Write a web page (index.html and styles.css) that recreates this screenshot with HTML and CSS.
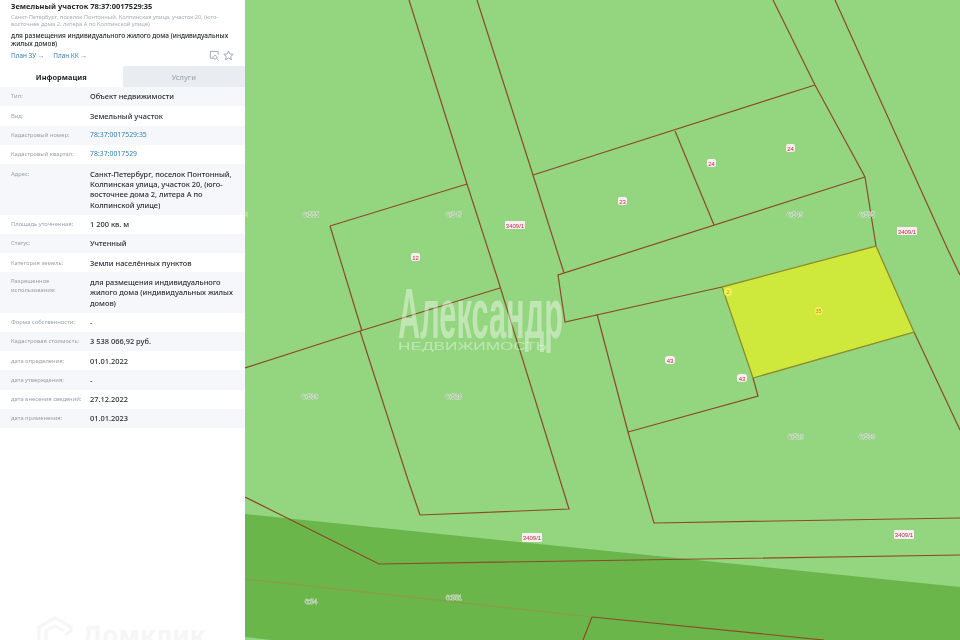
FILE: index.html
```html
<!DOCTYPE html>
<html lang="ru">
<head>
<meta charset="utf-8">
<title>Земельный участок 78:37:0017529:35</title>
<link rel="stylesheet" href="styles.css">
</head>
<body>
<div class="page">
  <aside class="panel">
    <header class="head">
      <h1 class="title">Земельный участок 78:37:0017529:35</h1>
      <p class="addr">Санкт-Петербург, поселок Понтонный, Колпинская улица, участок 20, (юго-восточнее дома 2, литера А по Колпинской улице)</p>
      <p class="use">для размещения индивидуального жилого дома (индивидуальных жилых домов)</p>
      <div class="actions">
        <a class="plan">План ЗУ →</a>
        <a class="plan">План КК →</a>
        <span class="icons">
          <svg class="icon" viewBox="0 0 12 12"><path d="M10 5V1.500H1.500V9H5M6.500 6a2 2 0 1 0 .01 0zM8.500 9.500l2 2" fill="none" stroke="#9aa3ad" stroke-width="1"/></svg>
          <svg class="icon" viewBox="0 0 12 12"><path d="M6 1l1.500 3.300 3.600.4-2.700 2.400.8 3.500L6 8.800l-3.200 1.800.8-3.500L.9 4.700l3.600-.4z" fill="none" stroke="#9aa3ad" stroke-width="1"/></svg>
        </span>
      </div>
    </header>
    <nav class="tabs">
      <div class="tab active">Информация</div>
      <div class="tab">Услуги</div>
    </nav>
    <dl class="rows">
      <div class="row"><dt>Тип:</dt><dd>Объект недвижимости</dd></div>
      <div class="row"><dt>Вид:</dt><dd>Земельный участок</dd></div>
      <div class="row"><dt>Кадастровый номер:</dt><dd class="link">78:37:0017529:35</dd></div>
      <div class="row"><dt>Кадастровый квартал:</dt><dd class="link">78:37:0017529</dd></div>
      <div class="row"><dt>Адрес:</dt><dd>Санкт-Петербург, поселок Понтонный, Колпинская улица, участок 20, (юго-восточнее дома 2, литера А по Колпинской улице)</dd></div>
      <div class="row"><dt>Площадь уточненная:</dt><dd>1 200 кв. м</dd></div>
      <div class="row"><dt>Статус:</dt><dd>Учтенный</dd></div>
      <div class="row"><dt>Категория земель:</dt><dd>Земли населённых пунктов</dd></div>
      <div class="row"><dt>Разрешенное использование:</dt><dd>для размещения индивидуального жилого дома (индивидуальных жилых домов)</dd></div>
      <div class="row"><dt>Форма собственности:</dt><dd>-</dd></div>
      <div class="row"><dt>Кадастровая стоимость:</dt><dd>3 538 066,92 руб.</dd></div>
      <div class="row"><dt>дата определения:</dt><dd>01.01.2022</dd></div>
      <div class="row"><dt>дата утверждения:</dt><dd>-</dd></div>
      <div class="row"><dt>дата внесения сведений:</dt><dd>27.12.2022</dd></div>
      <div class="row"><dt>дата применения:</dt><dd>01.01.2023</dd></div>
    </dl>
  </aside>
  <svg class="map" viewBox="245 0 715 640" aria-label="Кадастровая карта">
    <rect class="land" x="245" y="0" width="715" height="640"/>
    <polygon class="band" points="245,514 960,587 960,640 272,640 245,637"/>
    <polygon class="plot" points="722,287 876,246 914,332 753,378"/>
    <polyline class="faint" points="245,579 592,617"/>
    <g class="lines">
      <polyline points="409,0 467,184 498,280 569,509 420,515 408,480 360,331"/>
      <polyline points="330,226 467,184"/>
      <polyline points="330,226 362,331"/>
      <polyline points="245,368 360,331 500,288"/>
      <polyline points="477,0 533,175 564,273"/>
      <polyline points="533,175 815,85"/>
      <polyline points="773,0 815,85 865,177 876,246"/>
      <polyline points="835,0 948,250 960,275"/>
      <polyline points="675,131 714,225"/>
      <polyline points="865,177 558,275 565,322 722,287"/>
      <polyline points="597,314 628,432 654,523 960,518"/>
      <polyline points="628,432 758,396 753,378"/>
      <polyline points="914,332 960,430"/>
      <polyline points="245,497 379,564 960,555"/>
      <polyline points="592,617 824,640"/>
      <polyline points="592,617 583,640"/>
    </g>
    <polygon class="plot-edge" points="722,287 876,246 914,332 753,378"/>

    <g class="tag"><rect x="411" y="253" width="9" height="8" rx="2"/><text x="415.500" y="259.500">12</text></g>
    <g class="tag"><rect x="618" y="197" width="9" height="8" rx="2"/><text x="622.500" y="203.500">23</text></g>
    <g class="tag"><rect x="707" y="159" width="9" height="8" rx="2"/><text x="711.500" y="165.500">24</text></g>
    <g class="tag"><rect x="786" y="144" width="9" height="8" rx="2"/><text x="790.500" y="150.500">24</text></g>
    <g class="tag"><rect x="665" y="356" width="10" height="8" rx="3"/><text x="670" y="362.500">43</text></g>
    <g class="tag"><rect x="737" y="374" width="10" height="8" rx="3"/><text x="742" y="380.500">43</text></g>
    <g class="tag wide"><rect x="505" y="221" width="20" height="8" rx="1"/><text x="515" y="227.500">3409/1</text></g>
    <g class="tag wide"><rect x="897" y="227" width="20" height="8" rx="1"/><text x="907" y="233.500">3409/1</text></g>
    <g class="tag wide"><rect x="522" y="533" width="20" height="9" rx="1"/><text x="532" y="540">3409/1</text></g>
    <g class="tag wide"><rect x="894" y="530" width="20" height="9" rx="1"/><text x="904" y="537">3409/1</text></g>

    <g class="halo">
      <text x="311" y="216.500">6:555</text>
      <text x="454" y="216.500">6:547</text>
      <text x="795" y="216.500">6:549</text>
      <text x="867" y="216.500">6:555</text>
      <text x="310" y="398.500">6:530</text>
      <text x="454" y="398.500">6:528</text>
      <text x="796" y="438.500">6:529</text>
      <text x="867" y="438.500">6:530</text>
      <text x="311" y="603.500">6:54</text>
      <text x="454" y="599.500">6:551</text>
      <text x="246" y="216.500">9</text>
    </g>
    <g class="spot"><circle cx="728" cy="292" r="4"/><text x="728" y="294">2</text></g>
    <g class="spot"><circle cx="818.500" cy="311" r="4"/><text x="818.500" y="313">35</text></g>

    <text class="mark-big" x="398" y="338" textLength="165" lengthAdjust="spacingAndGlyphs">Александр</text>
    <text class="mark-small" x="398" y="350" textLength="149" lengthAdjust="spacingAndGlyphs">НЕДВИЖИМОСТЬ</text>
  </svg>
  <div class="brand">
    <svg class="brand-logo" viewBox="0 0 38 26"><path d="M3 26V11L19 2l16 9v4l-6 4M10 26V15l9-5 9 5" fill="none" stroke="#f6f6f6" stroke-width="3"/></svg>
    <span class="brand-name">Домклик</span>
  </div>
</div>
</body>
</html>
```

FILE: styles.css
```css
* { box-sizing: border-box; }
html, body { margin: 0; padding: 0; background: #fff; }
body { font-family: "Noto Sans", "Open Sans", sans-serif; }
.page { position: relative; display: flex; width: 960px; height: 640px; overflow: hidden; }

.panel { flex: 0 0 245px; width: 245px; background: #fff; color: #1f2328; filter: blur(.25px); }
.head { height: 66px; padding: 0 11px; }
.title { margin: 0; font-size: 7.500px; line-height: 12px; font-weight: 700; }
.addr { margin: 2px 0 0; font-size: 5.700px; line-height: 6.800px; color: #a8adb5; }
.use { margin: 4.400px 0 0; font-size: 6.500px; line-height: 8px; font-weight: 500; color: #23272c; }
.actions { display: flex; align-items: center; gap: 9px; margin-top: 2px; height: 12px; }
.plan { font-size: 6.400px; line-height: 10px; color: #2f7fb5; }
.icons { display: flex; gap: 3px; margin-left: auto; }
.icon { width: 11px; height: 11px; display: block; }

.tabs { display: flex; height: 21px; }
.tab { flex: 1 1 50%; display: flex; align-items: center; justify-content: center; font-size: 7.400px; font-weight: 700; color: #a0a8b0; background: #e9edf1; }
.tab:last-child { font-weight: 500; }
.tab.active { color: #1f2328; background: #fff; }

.rows { margin: 0; }
.row { display: grid; grid-template-columns: 79px 1fr; padding: 4.450px 7px 4.450px 11px; }
.row:nth-child(odd) { background: #f5f7fa; }
dt { font-size: 5.800px; line-height: 10.400px; color: #9ba1a9; white-space: nowrap; }
.row:nth-child(9) dt { line-height: 8.800px; white-space: normal; padding-right: 20px; }
dd { margin: 0; font-size: 7.450px; line-height: 10.400px; font-weight: 500; color: #2a2e33; }
dd.link { color: #2f7fb5; font-size: 6.900px; font-weight: 400; }

.map { flex: 1 1 auto; display: block; width: 715px; height: 640px; filter: blur(.25px); }
.land { fill: #94d580; }
.band { fill: #6ab64a; }
.plot { fill: #cfe83c; }
.lines polyline { fill: none; stroke: #8b4a28; stroke-width: 1.200px; }
.faint { fill: none; stroke: #8f9a4a; stroke-width: 1.200px; }
.plot-edge { fill: none; stroke: #8f8a2a; stroke-width: 1.300px; }

.tag rect { fill: #fbeef0; }
.tag text { font-family: "Liberation Sans", sans-serif; font-size: 6px; fill: #b8304e; text-anchor: middle; }
.halo text { font-family: "Liberation Sans", sans-serif; font-size: 6.500px; text-anchor: middle; fill: #86a87a; stroke: #fff; stroke-width: .6px; paint-order: stroke; }
.spot circle { fill: #f4ee55; }
.spot text { font-family: "Liberation Sans", sans-serif; font-size: 5.500px; fill: #b09a30; text-anchor: middle; }

.mark-big { font-family: "Liberation Sans", sans-serif; font-size: 70px; font-weight: 700; fill: #fff; fill-opacity: .4; }
.mark-small { font-family: "Liberation Sans", sans-serif; font-size: 11px; fill: #fff; fill-opacity: .42; }

.brand { position: absolute; left: 36px; top: 616px; display: flex; align-items: flex-start; gap: 8px; }
.brand-logo { width: 38px; height: 26px; display: block; }
.brand-name { font-size: 26px; line-height: 38px; font-weight: 700; color: #f6f6f6; }
```
